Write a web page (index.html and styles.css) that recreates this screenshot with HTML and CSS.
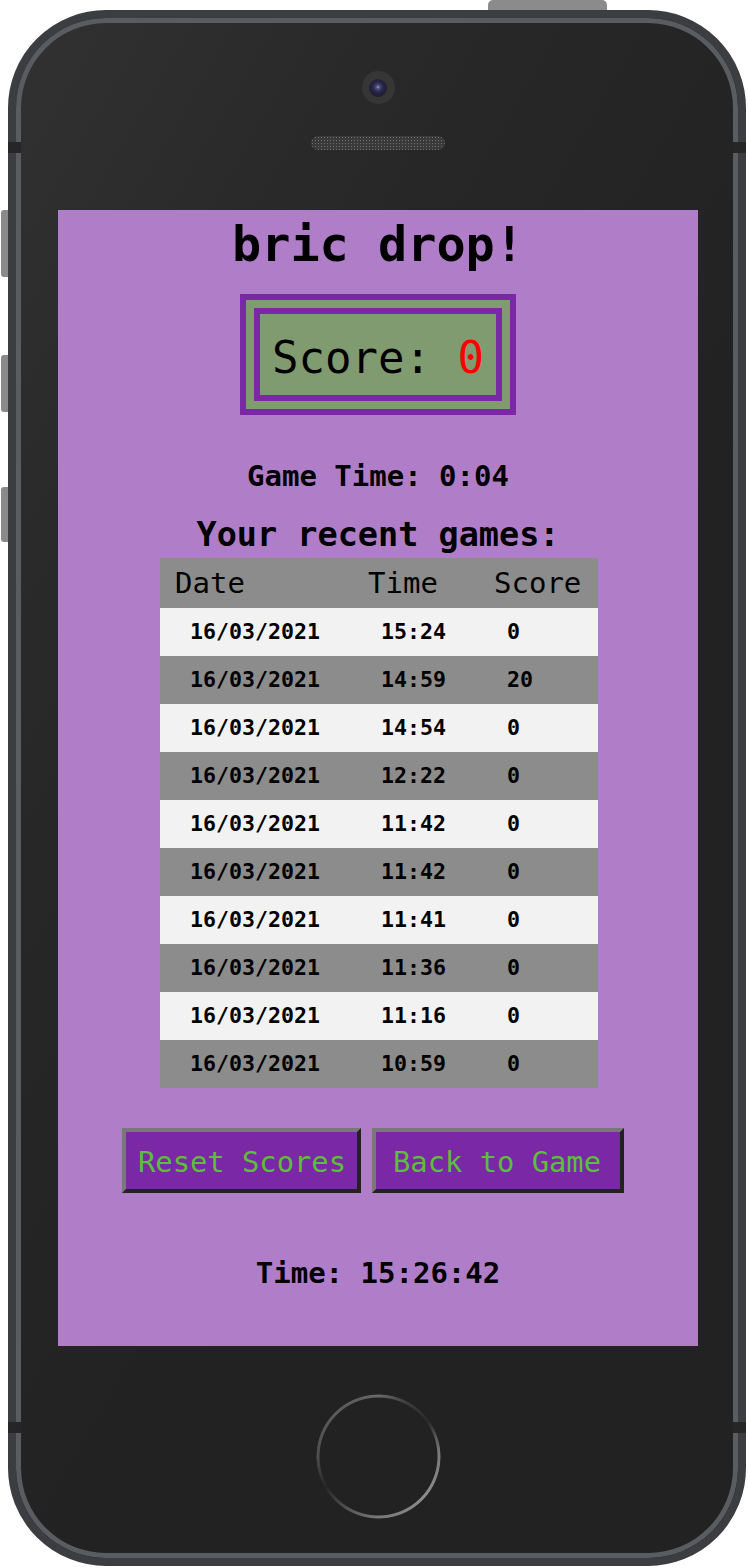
FILE: index.html
```html
<!DOCTYPE html>
<html lang="en">
<head>
<meta charset="utf-8">
<title>bric drop!</title>
<link rel="stylesheet" href="styles.css">
</head>
<body>
<div class="top-btn"></div>
<div class="side-btn side-btn-1"></div>
<div class="side-btn side-btn-2"></div>
<div class="side-btn side-btn-3"></div>
<div class="phone">
  <div class="notch notch-tl"></div>
  <div class="notch notch-tr"></div>
  <div class="notch notch-bl"></div>
  <div class="notch notch-br"></div>
  <div class="camera"><div class="lens"></div></div>
  <div class="speaker"></div>
  <div class="screen">
    <h1 class="title">bric drop!</h1>
    <div class="scorebox">
      <div class="scoreinner">Score: <span class="score-val">0</span></div>
    </div>
    <div class="gametime">Game Time: 0:04</div>
    <div class="recent">Your recent games:</div>
    <div class="table">
      <div class="thead"><span>Date</span><span>Time</span><span>Score</span></div>
      <div class="trow light"><span>16/03/2021</span><span>15:24</span><span>0</span></div>
      <div class="trow dark"><span>16/03/2021</span><span>14:59</span><span>20</span></div>
      <div class="trow light"><span>16/03/2021</span><span>14:54</span><span>0</span></div>
      <div class="trow dark"><span>16/03/2021</span><span>12:22</span><span>0</span></div>
      <div class="trow light"><span>16/03/2021</span><span>11:42</span><span>0</span></div>
      <div class="trow dark"><span>16/03/2021</span><span>11:42</span><span>0</span></div>
      <div class="trow light"><span>16/03/2021</span><span>11:41</span><span>0</span></div>
      <div class="trow dark"><span>16/03/2021</span><span>11:36</span><span>0</span></div>
      <div class="trow light"><span>16/03/2021</span><span>11:16</span><span>0</span></div>
      <div class="trow dark"><span>16/03/2021</span><span>10:59</span><span>0</span></div>
    </div>
    <div class="buttons">
      <button class="btn btn-reset">Reset Scores</button>
      <button class="btn btn-back">Back to Game</button>
    </div>
    <div class="clock">Time: 15:26:42</div>
  </div>
  <div class="home"></div>
</div>
</body>
</html>
```
FILE: styles.css
```css
html, body {
  margin: 0;
  padding: 0;
  background: #ffffff;
}

body {
  width: 748px;
  height: 1568px;
  position: relative;
  overflow: hidden;
  font-family: "DejaVu Sans Mono", monospace;
}

.top-btn {
  position: absolute;
  left: 488px;
  top: 0;
  width: 119px;
  height: 14px;
  background: #8b8b8b;
  border-radius: 5px 5px 0 0;
}

.side-btn {
  position: absolute;
  left: 1px;
  width: 10px;
  background: #8a8a8a;
  border-radius: 3px 0 0 3px;
}
.side-btn-1 { top: 210px; height: 67px; }
.side-btn-2 { top: 355px; height: 57px; }
.side-btn-3 { top: 487px; height: 55px; }

.phone {
  position: relative;
  margin: 10px 0 0 8px;
  width: 738px;
  height: 1556px;
  box-sizing: border-box;
  border: 8px solid #3b3d40;
  border-radius: 98px;
  background: linear-gradient(120deg, #313131 0%, #272727 30%, #222222 60%, #222222 100%);
  box-shadow: inset 0 0 0 5px #595c60;
  display: flex;
  flex-direction: column;
  align-items: center;
  padding-left: 2px;
}

.notch {
  position: absolute;
  width: 13px;
  height: 11px;
  background: #262626;
}
.notch-tl { left: -8px; top: 124px; }
.notch-tr { right: -8px; top: 124px; }
.notch-bl { left: -8px; top: 1404px; }
.notch-br { right: -8px; top: 1404px; }

.camera {
  margin-top: 53px;
  width: 33px;
  height: 33px;
  border-radius: 50%;
  background: #363636;
  display: flex;
  align-items: center;
  justify-content: center;
  flex-shrink: 0;
}
.lens {
  width: 18px;
  height: 18px;
  border-radius: 50%;
  background: radial-gradient(circle at 50% 45%, #9a9ac0 0, #4a4a78 2px, #27274a 5px, #1d1d33 9px);
}

.speaker {
  margin-top: 32px;
  width: 134px;
  height: 14px;
  border-radius: 7px;
  background-color: #3a3a3a;
  background-image: radial-gradient(circle, #6e6e6e 40%, transparent 45%);
  background-size: 3px 3px;
  flex-shrink: 0;
}

.screen {
  margin-top: 60px;
  width: 640px;
  height: 1136px;
  flex-shrink: 0;
  box-sizing: border-box;
  padding-top: 6px;
  background: #b07ec8;
  display: flex;
  flex-direction: column;
  align-items: center;
  color: #000;
}

.title {
  margin: 0;
  font-size: 48.5px;
  font-weight: bold;
  line-height: 56px;
}

.scorebox {
  margin-top: 22px;
  border: 6px solid #7b28a6;
  padding: 8px;
  background: #7f9b6f;
}
.scoreinner {
  border: 6px solid #7b28a6;
  padding: 18px 12px 12px;
  font-size: 44px;
  line-height: 51px;
  white-space: pre;
}
.score-val { color: #ff0000; }

.gametime {
  margin-top: 44px;
  font-size: 29px;
  font-weight: bold;
  line-height: 34px;
}

.recent {
  margin-top: 23px;
  font-size: 33.5px;
  font-weight: bold;
  line-height: 38px;
}

.table {
  margin-top: 4px;
  margin-left: 2px;
  width: 438px;
}
.thead {
  display: grid;
  grid-template-columns: 193px 126px 1fr;
  padding-left: 15px;
  height: 50px;
  box-sizing: border-box;
  padding-top: 1px;
  background: #8c8c8c;
  font-size: 29px;
  line-height: 48px;
}
.trow {
  display: grid;
  grid-template-columns: 191px 126px 1fr;
  padding-left: 30px;
  height: 48px;
  box-sizing: border-box;
  padding-top: 1px;
  font-size: 21.6px;
  font-weight: bold;
  line-height: 46px;
}
.trow.light { background: #f2f2f2; }
.trow.dark { background: #8c8c8c; }

.buttons {
  margin-top: 40px;
  display: flex;
  gap: 11px;
  padding-right: 10px;
}
.btn {
  height: 65px;
  box-sizing: border-box;
  margin: 0;
  border-width: 4px;
  border-style: solid;
  border-color: #787878 #222222 #222222 #787878;
  background: #7b28a6;
  color: #5cbf3a;
  font-family: "DejaVu Sans Mono", monospace;
  font-size: 28.8px;
  line-height: 34px;
  padding-top: 13px;
  padding-bottom: 10px;
  white-space: pre;
}
.btn-reset { padding-left: 12px; padding-right: 11px; }
.btn-back { padding-left: 17px; padding-right: 19px; }

.clock {
  margin-top: 63px;
  font-size: 29px;
  font-weight: bold;
  line-height: 34px;
}

.home {
  margin-top: 48px;
  width: 125px;
  height: 125px;
  flex-shrink: 0;
  border-radius: 50%;
  background: conic-gradient(from 0deg, #6a6a6a 0deg, #3a3a3a 30deg, #2a2a2a 55deg, #7a7a7a 85deg, #8c8c8c 130deg, #7a7a7a 180deg, #555555 210deg, #262626 240deg, #4e4e4e 270deg, #5a5a5a 310deg, #5e5e5e 340deg, #6a6a6a 360deg);
  -webkit-mask: radial-gradient(circle closest-side, transparent 58.5px, #000 59.5px, #000 61.5px, transparent 62.5px);
  mask: radial-gradient(circle closest-side, transparent 58.5px, #000 59.5px, #000 61.5px, transparent 62.5px);
}
```
